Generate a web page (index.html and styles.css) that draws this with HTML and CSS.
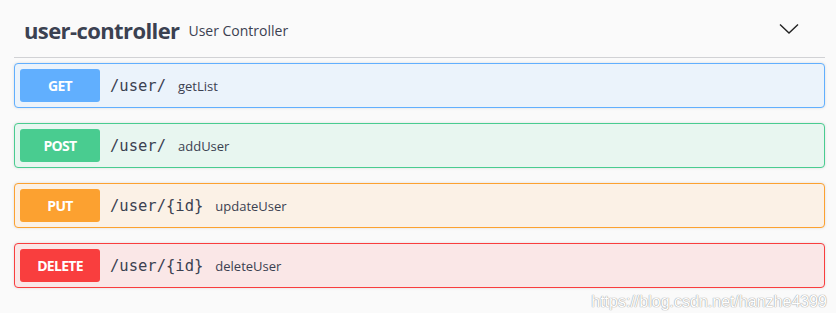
FILE: index.html
```html
<!DOCTYPE html>
<html lang="en">
<head>
    <meta charset="UTF-8">
    <title>user-controller</title>
    <link rel="stylesheet" href="styles.css">
</head>
<body>
<div class="tag-section">
    <div class="tag-header">
        <span class="tag-name">user-controller</span>
        <span class="tag-desc">User Controller</span>
        <svg class="arrow" width="20" height="20" viewBox="0 0 20 20">
            <path d="M1 5.5 L10 14 L19 5.5" fill="none" stroke="#222" stroke-width="1.4"/>
        </svg>
    </div>
    <div class="opblock get">
        <span class="method">GET</span>
        <span class="path">/user/</span>
        <span class="summary">getList</span>
    </div>
    <div class="opblock post">
        <span class="method">POST</span>
        <span class="path">/user/</span>
        <span class="summary">addUser</span>
    </div>
    <div class="opblock put">
        <span class="method">PUT</span>
        <span class="path">/user/{id}</span>
        <span class="summary">updateUser</span>
    </div>
    <div class="opblock delete">
        <span class="method">DELETE</span>
        <span class="path">/user/{id}</span>
        <span class="summary">deleteUser</span>
    </div>
    <div class="watermark">https://blog.csdn.net/hanzhe4399</div>
</div>
</body>
</html>
```

FILE: styles.css
```css
body {
    margin: 0;
    background: #fafafa;
    font-family: "Open Sans", sans-serif;
    color: #3b4151;
}

.tag-section {
    padding: 0 11px 0 14px;
}

.tag-header {
    display: flex;
    align-items: center;
    height: 57px;
    border-bottom: 1px solid #d1d2d5;
    padding-left: 10px;
    margin-bottom: 5px;
}

.tag-name {
    font-size: 22px;
    font-weight: 700;
    letter-spacing: -0.6px;
    margin-top: 2px;
}

.tag-desc {
    font-size: 14px;
    margin-left: 9px;
    margin-top: 3px;
}

.arrow {
    margin-left: auto;
    margin-right: 26px;
    margin-top: 1px;
}

.opblock {
    display: flex;
    align-items: center;
    height: 43px;
    padding: 0 5px;
    border: 1px solid;
    border-radius: 4px;
    margin-bottom: 15px;
    box-shadow: 0 0 3px rgba(0, 0, 0, .12);
}

.method {
    width: 80px;
    height: 33px;
    line-height: 33px;
    border-radius: 3px;
    text-align: center;
    color: #fff;
    font-size: 14px;
    font-weight: 700;
    letter-spacing: -0.7px;
}

.path {
    font-family: "DejaVu Sans Mono", monospace;
    font-size: 15.5px;
    margin-left: 10px;
    color: #3b4151;
}

.summary {
    font-size: 13px;
    margin-left: 12px;
    color: #3b4151;
}

.get { background: #ebf3fb; border-color: #61affe; }
.get .method { background: #61affe; }

.post { background: #e8f6f0; border-color: #49cc90; }
.post .method { background: #49cc90; }

.put { background: #fbf1e6; border-color: #fca130; }
.put .method { background: #fca130; }

.delete { background: #fae7e7; border-color: #f93e3e; }
.delete .method { background: #f93e3e; }

.watermark {
    text-align: right;
    margin-top: -10px;
    margin-right: -2px;
    font-family: "Liberation Sans", sans-serif;
    font-size: 16px;
    color: #fff;
    text-shadow: 0 0 1px #999, 0 0 1px #999;
}
```
